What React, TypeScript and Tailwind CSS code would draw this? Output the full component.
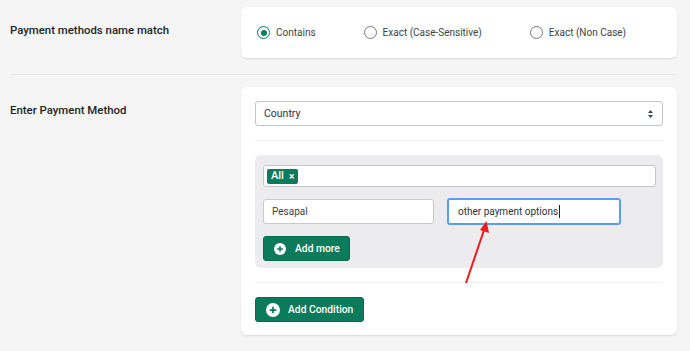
import React from "react";

const Radio = ({ checked, label }: { checked?: boolean; label: string }) => (
  <label className="flex items-center gap-[6px]">
    <span
      className={
        checked
          ? "w-[13px] h-[13px] rounded-full border-[1.5px] border-[#0b7b5b] flex items-center justify-center"
          : "w-[13px] h-[13px] rounded-full border border-[#7a7a7a]"
      }
    >
      {checked && <span className="w-[6px] h-[6px] rounded-full bg-[#0b7b5b]" />}
    </span>
    <span className="text-[10px] text-[#3c434a] whitespace-nowrap">{label}</span>
  </label>
);

const PlusCircle = ({ size }: { size: number }) => (
  <svg width={size} height={size} viewBox="0 0 16 16" className="shrink-0">
    <circle cx="8" cy="8" r="8" fill="#fff" />
    <path d="M8 4.2v7.6M4.2 8h7.6" stroke="#0b7b5b" strokeWidth="2" />
  </svg>
);

export default function App() {
  return (
    <div className="relative w-[690px] h-[351px] bg-[#f5f5f5] pl-[10px] pr-[13px] pt-[7px] font-['Roboto','Noto_Sans',sans-serif] text-[#1d2327] overflow-hidden">
      {/* Row 1 */}
      <div className="flex">
        <div className="w-[231px] pt-[15px] text-[11.4px] font-medium whitespace-nowrap">
          Payment methods name match
        </div>
        <div className="flex-1 h-[51px] bg-white rounded-[6px] shadow-[0_1px_2px_rgba(0,0,0,0.12)] flex items-center pl-[16px] gap-[48px]">
          <Radio checked label="Contains" />
          <Radio label="Exact (Case-Sensitive)" />
          <Radio label="Exact (Non Case)" />
        </div>
      </div>

      <div className="mt-[16px] h-[1px] bg-[#e6e7e9]" />

      {/* Row 2 */}
      <div className="flex mt-[12px]">
        <div className="w-[231px] pt-[15px] text-[11.4px] font-medium whitespace-nowrap">
          Enter Payment Method
        </div>
        <div className="flex-1 bg-white rounded-[6px] shadow-[0_1px_2px_rgba(0,0,0,0.12)] p-[14px] pb-[13px]">
          <div className="h-[25px] border border-[#c3c4c7] rounded-[3px] flex items-center justify-between pl-[8px] pr-[8px]">
            <span className="text-[10.5px] text-[#2c3338]">Country</span>
            <svg width="7" height="10" viewBox="0 0 7 10">
              <path d="M3.5 1L6 4H1z" fill="#3c434a" />
              <path d="M3.5 9L6 6H1z" fill="#3c434a" />
            </svg>
          </div>

          <div className="mt-[14px] h-[1px] bg-[#f0f0f1]" />

          <div className="mt-[14px] bg-[#ececee] rounded-[6px] pt-[10px] pl-[8px] pr-[7px] pb-[7px]">
            <div className="h-[22px] bg-white border border-[#c3c4c7] rounded-[3px] flex items-center pl-[3px]">
              <span className="h-[15px] bg-[#0b7b5b] text-white rounded-[2px] px-[4px] flex items-center gap-[5px] text-[11px] font-medium">
                All <span className="text-[10px]">×</span>
              </span>
            </div>
            <div className="mt-[11px] flex items-center gap-[13px]">
              <div className="w-[171px] h-[25px] bg-white border border-[#c8c9cc] rounded-[3px] flex items-center pl-[8px] text-[10px] text-[#3c434a]">
                Pesapal
              </div>
              <div className="w-[174px] h-[27px] bg-white border-2 border-[#5a9cf0] rounded-[3px] flex items-center pl-[9px] text-[10px] text-[#2c3338] whitespace-nowrap">
                other payment options<span className="w-[1px] h-[13px] bg-[#222] ml-[1px]" />
              </div>
            </div>
            <button className="mt-[11px] h-[25px] w-[87px] bg-[#0b7b5b] rounded-[3px] border border-[#0a6a4f] flex items-center pl-[10px] gap-[9px] text-white text-[10.3px] font-medium whitespace-nowrap">
              <PlusCircle size={12} />
              Add more
            </button>
          </div>

          <div className="mt-[14px] h-[1px] bg-[#f0f0f1]" />

          <button className="mt-[14px] h-[25px] w-[109px] bg-[#0b7b5b] rounded-[3px] border border-[#0a6a4f] flex items-center pl-[10px] gap-[8px] text-white text-[10.3px] font-medium whitespace-nowrap">
            <PlusCircle size={14} />
            Add Condition
          </button>
        </div>
      </div>

      {/* red arrow annotation */}
      <svg className="absolute left-0 top-0 pointer-events-none" width="690" height="351">
        <line x1="466" y1="283" x2="484" y2="230" stroke="#f21b1b" strokeWidth="2" />
        <path d="M486.5 221 L489 233 L480 230 Z" fill="#f21b1b" />
      </svg>
    </div>
  );
}
